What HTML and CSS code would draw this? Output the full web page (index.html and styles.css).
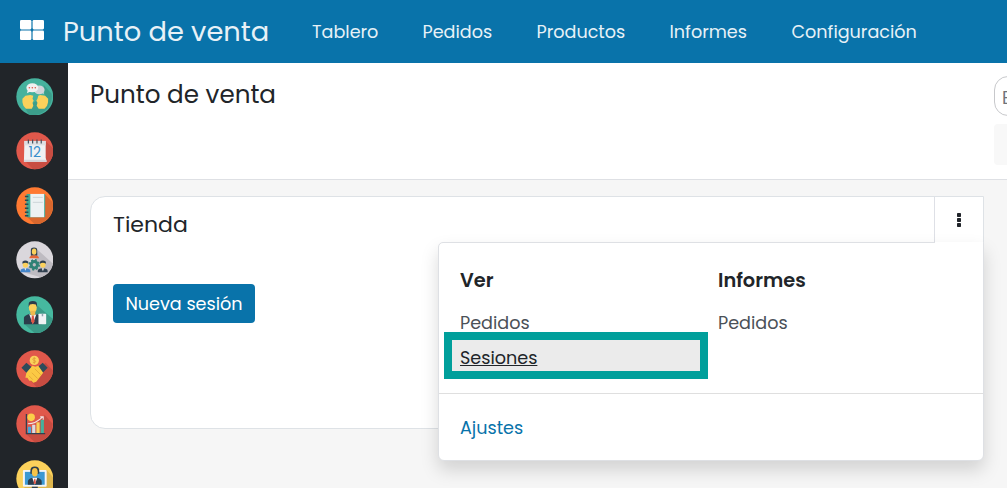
FILE: index.html
```html
<!DOCTYPE html>
<html lang="es">
<head>
<meta charset="utf-8">
<title>Punto de venta</title>
<link rel="stylesheet" href="styles.css">
</head>
<body>
<header class="navbar">
  <svg class="apps-icon" width="24" height="20" viewBox="0 0 24 20" fill="#fff"><rect width="11.4" height="9.4" rx="1.3"/><rect x="12.6" width="11.4" height="9.4" rx="1.3"/><rect y="10.6" width="11.4" height="9.4" rx="1.3"/><rect x="12.6" y="10.6" width="11.4" height="9.4" rx="1.3"/></svg>
  <a class="brand">Punto de venta</a>
  <nav class="nav-menu">
    <a class="nav-tablero">Tablero</a><a class="nav-pedidos">Pedidos</a><a class="nav-productos">Productos</a><a class="nav-informes">Informes</a><a class="nav-config">Configuración</a>
  </nav>
</header>
<div class="body">
  <aside class="sidebar">
    <svg class="app" viewBox="0 0 38 38"><circle cx="19" cy="19" r="18.7" fill="#46b29d"/><path d="M28 7l8 9a18.7 18.7 0 0 1-23 21l-4-7 20-12z" fill="#3c9e8b"/><path d="M6.500 21l3-3 5-.8 3 .8-.8 3 1.200 2-1.200 2 .8 3-1.500 3H10l-2.500-3-1-3.500zM32.500 21l-3-3-5-.8-2 .8-.8 3-1.200 2 1.200 2-.8 3 2 3h6l2.500-3 1-3.500z" fill="#fbd15b"/><ellipse cx="23.500" cy="12" rx="5.400" ry="4.300" fill="#d3d5da"/><path d="M25 14.500l3.200 2-.7-5z" fill="#d3d5da"/><ellipse cx="16.500" cy="9.800" rx="6" ry="4.600" fill="#f1f1f1"/><path d="M12 12l-1 3.500 4-2z" fill="#f1f1f1"/><g fill="#df5545"><circle cx="13.500" cy="9.800" r=".8"/><circle cx="16.500" cy="9.800" r=".8"/><circle cx="19.500" cy="9.800" r=".8"/></g></svg>
    <svg class="app" viewBox="0 0 38 38"><circle cx="19" cy="19" r="18.7" fill="#e0584b"/><path d="M30 9l7.5 7.500A18.700 18.700 0 0 1 17 37.500L9 29z" fill="#c84d42"/><path d="M8.500 9h21.500v17l1 4h-23z" fill="#f0f1f3"/><path d="M8.500 9H30v4.500H8.500z" fill="#dedfe3"/><path d="M8 28h22.600l.4 2H8z" fill="#d4d5da"/><path d="M12.500 7.500v4M16.800 7.500v4M21.200 7.500v4M25.500 7.500v4" stroke="#45505b" stroke-width="1.200"/><text class="calendar-day" x="19" y="25">12</text></svg>
    <svg class="app" viewBox="0 0 38 38"><circle cx="19" cy="19" r="18.7" fill="#ff7a32"/><path d="M29 7l8 8.500A18.700 18.700 0 0 1 19 37.700L11 30z" fill="#d9682e"/><rect x="10.500" y="7" width="19" height="23.500" rx="1" fill="#3fa894"/><path d="M14.500 7h14v23.500h-14z" fill="#edf2f3"/><path d="M17 10.500h10M17 15.500h10" stroke="#cbd4d8"/><path d="M9 9.500h3.500M9 13.500h3.500M9 17.500h3.500M9 21.500h3.500M9 25.500h3.500M9 29h3.500" stroke="#274b53" stroke-width="1.500"/></svg>
    <svg class="app" viewBox="0 0 38 38"><circle cx="19" cy="19" r="18.7" fill="#dad7dc"/><path d="M22 9l15.500 14A18.700 18.700 0 0 1 25 36.700L6 31l13-10z" fill="#bebbc1"/><circle cx="18.500" cy="24" r="3.200" fill="none" stroke="#2f8175" stroke-width="3"/><circle cx="18.500" cy="24" r="5" fill="none" stroke="#2f8175" stroke-width="1.500" stroke-dasharray="2 1.930"/><path d="M15 15V9q0-2.500 3.200-2.500T21.500 9v6z" fill="#314150"/><ellipse cx="18.300" cy="10.800" rx="2.300" ry="3.100" fill="#fbd15b"/><path d="M13.500 17.500q0-3 4.800-3t5 3z" fill="#e56836"/><ellipse cx="9.500" cy="23.800" rx="2.700" ry="3.300" fill="#fbd15b"/><path d="M6.500 23v-2q3-2.500 6 0v2q-3-2-6 0z" fill="#314150"/><path d="M4.500 31.500v-1.300q0-2.700 5-2.700t5 2.700v1.300z" fill="#4385c9"/><ellipse cx="27.200" cy="23.800" rx="2.700" ry="3.300" fill="#fbd15b"/><path d="M24.200 23v-2q3-2.500 6 0v2q-3-2-6 0z" fill="#314150"/><path d="M22 31.500v-1.300q0-2.700 5-2.700t5 2.700v1.300z" fill="#314150"/><path d="M26 27.500h2.400l-1.200 3zM8.500 27.500h2l-1 2.500z" fill="#eee"/></svg>
    <svg class="app" viewBox="0 0 38 38"><circle cx="19" cy="19" r="18.7" fill="#46b99f"/><path d="M21 9l16 14A18.700 18.700 0 0 1 19 37.700L8 28z" fill="#3a9a87"/><ellipse cx="17" cy="11.500" rx="4" ry="5.500" fill="#fbd15b"/><path d="M12.800 11V8q0-3 4.200-3t4.200 3v3L20 8.500q-3-1-6 0z" fill="#2b3d4b"/><path d="M14.500 15h5v5h-5z" fill="#edba4e"/><path d="M8 28.500V22q0-2 6-4l3 4 3-4q6 2 6 4v6.500z" fill="#2b3d4b"/><path d="M13.300 18.300L17 28.300l3.700-10-3.700 2z" fill="#f4f4f4"/><path d="M16 20h2l.7 5.500-1.700 3-1.700-3z" fill="#df5545"/><rect x="22.700" y="18" width="7.800" height="10.500" rx=".7" fill="#eff2f4"/><path d="M26 18h1.500v2.500H26z" fill="#8ba1ad"/></svg>
    <svg class="app" viewBox="0 0 38 38"><circle cx="19" cy="19" r="18.7" fill="#e0584b"/><path d="M30 13l7.500 8A18.700 18.700 0 0 1 21 37.700L11 27z" fill="#c74c41"/><path d="M5.500 18l5-5 6 5-5 6zM32 18l-5-5-6 5 5 6z" fill="#2d4b5a"/><path d="M10.500 23l6-7 3 1 3-1 5 7-7 9-3 1-2-2-2 0-2-3-2 0z" fill="#fbc944"/><path d="M19 19l6 6M16 23l6 6M13 26l4 4" stroke="#e0a435" stroke-width=".8"/><circle cx="18.500" cy="10.500" r="4.700" fill="#fbd15b"/><path d="M20 8.500q-3-1-3 .8 0 1.200 1.500 1.300 1.700.2 1.500 1.300-.4 1.300-3 .5M18.500 7v7" fill="none" stroke="#dd9b35" stroke-width=".8"/></svg>
    <svg class="app" viewBox="0 0 38 38"><circle cx="19" cy="19" r="18.7" fill="#e0584b"/><path d="M29 10l8 9A18.700 18.700 0 0 1 19 37.700L10 29z" fill="#c74c41"/><path d="M10.500 9v20h19" fill="none" stroke="#314150" stroke-width="1.300"/><path d="M12 22h3.300v6.300H12z" fill="#4aa6dc"/><path d="M16.300 20h3.300v8.300h-3.300z" fill="#dadbe1"/><path d="M20.600 17.500h3.300v10.800h-3.300z" fill="#fbd15b"/><path d="M24.900 15h3.300v13.300h-3.300z" fill="#46b29d"/><circle cx="15.300" cy="12.500" r="3.800" fill="#fbcf49"/><path d="M12 19q8 0 15-7m-2.500 0h3v3" fill="none" stroke="#efe5e5" stroke-width="1.100"/></svg>
    <svg class="app" viewBox="0 0 38 38"><circle cx="19" cy="19" r="18.700" fill="#fbd15b"/><path d="M31 10l7 8v20H17L7 26z" fill="#dfb74e"/><rect x="7" y="10" width="24" height="17" rx="1" fill="#f4f5f7"/><path d="M9 12h20v13H9z" fill="#3c98d2"/><path d="M14.500 14v-3q0-4.500 4.500-4.500t4.500 4.500v3z" fill="#2b3d4b"/><ellipse cx="19" cy="12.500" rx="3" ry="4.300" fill="#f6c348"/><path d="M12 25v-3q0-3 5-4h4q5 1 5 4v3z" fill="#2b3d4b"/><path d="M16.500 18L19 25l2.500-7z" fill="#fff"/><path d="M18.400 19h1.200l.6 5h-2.400z" fill="#df5545"/><path d="M16 27h6v4h-6z" fill="#314150"/></svg>
  </aside>
  <main class="content">
    <section class="control-panel">
      <h1 class="page-title">Punto de venta</h1>
      <div class="search-area"><div class="search">B</div><div class="search-options"></div></div>
    </section>
    <section class="kanban">
      <article class="card">
        <div class="card-body">
          <h2 class="card-title">Tienda</h2>
          <button class="primary"><span>Nueva sesión</span></button>
        </div>
        <button class="toggle" aria-label="Menú"><svg width="6" height="16" viewBox="0 0 6 16" fill="#20242a"><rect x="1" y="1" width="4" height="4" rx=".7"/><rect x="1" y="6" width="4" height="4" rx=".7"/><rect x="1" y="11" width="4" height="4" rx=".7"/></svg></button>
        <div class="dropdown">
          <div class="columns">
            <div class="column"><h3>Ver</h3><a class="item">Pedidos</a><a class="item selected">Sesiones</a></div>
            <div class="column"><h3>Informes</h3><a class="item">Pedidos</a></div>
          </div>
          <div class="settings"><a>Ajustes</a></div>
        </div>
      </article>
    </section>
  </main>
</div>
</body>
</html>
```
FILE: styles.css
```css
* { box-sizing: border-box; }
body { margin: 0; width: 1007px; height: 488px; overflow: hidden; font-family: Poppins, Inter, sans-serif; font-size: 17.6px; color: #212529; background: #f6f6f6; }
h1, h2, h3 { margin: 0; font-weight: 400; }
a, h1, h2, h3, span { white-space: nowrap; }
button { font: inherit; border: 0; padding: 0; }
.navbar { height: 63px; display: flex; align-items: center; background: #0973aa; color: #e7f1f7; padding-left: 20px; }
.apps-icon { flex: none; margin-bottom: 3px; }
.brand { width: 249px; padding-left: 19px; flex: none; font-size: 27.3px; line-height: 40px; }
.nav-menu { display: flex; padding-left: 19px; }
.nav-tablero { width: 110.5px; }
.nav-pedidos { width: 114px; }
.nav-productos { width: 133px; }
.nav-informes { width: 122px; }
.body { display: flex; height: 425px; }
.sidebar { width: 68px; flex: none; overflow: hidden; background: #212529; display: flex; flex-direction: column; gap: 17px; padding: 14.5px 0 0 15.5px; }
.app { width: 37.6px; height: 37.6px; flex: none; }
.calendar-day { font-size: 14px; fill: #398ecb; text-anchor: middle; }
.content { flex: 1; min-width: 0; }
.control-panel { height: 117px; border-bottom: 1px solid #dee0e4; background: #fff; display: flex; justify-content: space-between; padding: 13px 0 0 22px; }
.page-title { font-size: 24.64px; line-height: 38px; }
.search-area { width: 13px; flex: none; overflow: hidden; }
.search { width: 120px; height: 40px; border: 1px solid #c7c8cb; border-radius: 14px; padding: 0 7px; line-height: 42px; font-size: 17.6px; color: #6f747b; }
.search-options { width: 120px; height: 41px; margin-top: 8px; background: #f8f8f8; border-radius: 4px; }
.kanban { padding: 16px 23px 0 22px; }
.card { position: relative; height: 233px; width: 894px; display: flex; justify-content: space-between; background: #fff; border: 1px solid #dee2e6; border-radius: 15px 0 15px 15px; }
.card-body { padding: 11px 0 0 22px; }
.card-title { font-size: 22px; line-height: 34px; }
.primary { display: flex; align-items: center; justify-content: center; width: 142px; height: 39px; margin-top: 42px; border-radius: 4px; background: #0973aa; color: #fff; }
.toggle { width: 49px; height: 46px; border-left: 1px solid #dee0e6; background: #fff; display: flex; align-items: center; justify-content: center; }
.dropdown { position: absolute; top: 45px; right: -1px; width: 546px; height: 219px; border: 1px solid #dee0e4; border-radius: 5px 0 6px 6px; background: #fff; box-shadow: 0 9px 18px rgba(0, 0, 0, .15); }
.dropdown::before { content: ""; position: absolute; top: -1px; right: 0; width: 48px; height: 1px; background: #fff; }
.columns { height: 151px; display: flex; gap: 10px; padding: 20px 8px 0 13px; border-bottom: 1px solid #dfdfdf; }
.column { width: 248px; flex: none; }
.column h3 { font-size: 19.36px; line-height: 36px; padding-left: 8px; font-weight: 600; }
.item { display: block; padding-left: 8px; height: 35px; line-height: 34px; color: #4b5158; }
.column h3 + .item { margin-top: 7px; }
.selected { height: 31px; line-height: 37px; background: #ebebeb; color: #212529; text-decoration: underline; margin-top: -1px; outline: 8px solid #009f9b; position: relative; }
.settings { height: 66px; line-height: 68px; padding-left: 21px; color: #0973aa; }
```
